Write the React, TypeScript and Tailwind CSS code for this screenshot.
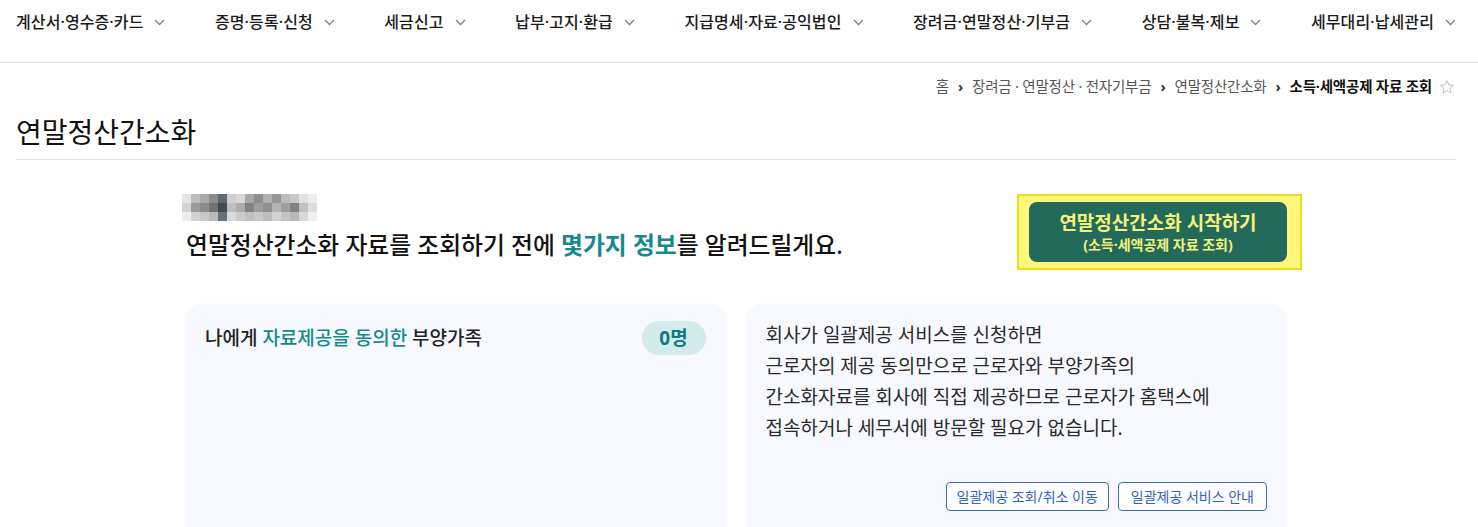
import React from "react";

const FONT = { fontFamily: '"Noto Sans", "Noto Sans CJK KR", sans-serif' };

const navItems = [
  "계산서·영수증·카드",
  "증명·등록·신청",
  "세금신고",
  "납부·고지·환급",
  "지급명세·자료·공익법인",
  "장려금·연말정산·기부금",
  "상담·불복·제보",
  "세무대리·납세관리",
];

function Chevron() {
  return (
    <svg width="11" height="7" viewBox="0 0 11 7" className="ml-[11px] mt-[1px]">
      <polyline points="1,1 5.5,5.5 10,1" fill="none" stroke="#808080" strokeWidth="1.3" />
    </svg>
  );
}

function Star() {
  return (
    <svg width="16" height="16" viewBox="0 0 24 24" className="ml-[7px]">
      <polygon
        points="12,2.5 14.9,8.9 21.8,9.6 16.6,14.2 18.1,21 12,17.5 5.9,21 7.4,14.2 2.2,9.6 9.1,8.9"
        fill="none"
        stroke="#b5b5b5"
        strokeWidth="1.3"
        strokeLinejoin="round"
      />
    </svg>
  );
}

const blur = [
  ["#e4e4e4", "#bdbdbd", "#a9a9a9", "#8c8c8c", "#5f6870", "#cfcfcf", "#d8d8d8", "#a8a8a8", "#8d8d8d", "#b0b0b0", "#969696", "#bcbcbc", "#c8c8c8", "#e0e0e0", "#ececec"],
  ["#d4d4d4", "#9a9a9a", "#8c8c8c", "#727272", "#3f4b57", "#bdbdbd", "#acacac", "#838383", "#9e9e9e", "#8f8f8f", "#b5b5b5", "#9e9e9e", "#828282", "#c0c0c0", "#dddddd"],
  ["#ededed", "#d2d2d2", "#c9c9c9", "#bababa", "#66717b", "#dadada", "#cbcbcb", "#c0c0c0", "#c8c8c8", "#bebebe", "#d4d4d4", "#c4c4c4", "#b8b8b8", "#d8d8d8", "#f0f0f0"],
];

function BlurName() {
  return (
    <div className="flex flex-col w-[136px] h-[27px] overflow-hidden">
      {blur.map((row, i) => (
        <div key={i} className="flex h-[9px]">
          {row.map((c, j) => (
            <div key={j} className="h-[9px] w-[9px] shrink-0" style={{ backgroundColor: c }} />
          ))}
        </div>
      ))}
    </div>
  );
}

export default function App() {
  return (
    <div className="w-[1478px] h-[527px] overflow-hidden bg-white text-[#222]" style={FONT}>
      {/* Top nav */}
      <div className="h-[63px] border-b border-[#e3e3e3] flex justify-between items-start pt-[10px] pl-[16px] pr-[22px]">
        {navItems.map((t) => (
          <div key={t} className="flex items-center h-[24px]">
            <span className="text-[16px] font-medium tracking-[0.1px] text-[#1a1a1a] leading-[24px]">{t}</span>
            <Chevron />
          </div>
        ))}
      </div>

      <div className="pl-[16px] pr-[22px]">
        {/* Breadcrumb */}
        <div className="flex justify-end items-center h-[48px] pr-[1px] text-[14.5px] text-[#555] tracking-[-0.2px]">
          <span>홈</span>
          <span className="mx-[9px] font-bold text-[#333]">›</span>
          <span>장려금 · 연말정산 · 전자기부금</span>
          <span className="mx-[9px] font-bold text-[#333]">›</span>
          <span>연말정산간소화</span>
          <span className="mx-[9px] font-bold text-[#333]">›</span>
          <span className="font-bold text-[#111]">소득·세액공제 자료 조회</span>
          <Star />
        </div>

        {/* Title */}
        <div className="h-[49px] border-b border-[#e3e3e3] flex items-start">
          <h1 className="text-[28px] leading-[42px] text-[#111] font-normal">연말정산간소화</h1>
        </div>

        {/* Content */}
        <div className="w-[1100px] mx-auto">
          <div className="flex justify-between items-start pt-[34px]">
            <div className="flex flex-col">
              <div className="ml-[-4px]">
                <BlurName />
              </div>
              <p className="mt-[7px] text-[23.8px] leading-[34px] font-medium text-[#111]">
                연말정산간소화 자료를 조회하기 전에 <span className="text-[#148a8e] font-bold">몇가지 정보</span>를 알려드릴게요.
              </p>
            </div>
            <div className="mr-[-16px] bg-[#fff67a] border-2 border-[#ecdf16] pl-[10px] pr-[13px] py-[6px]">
              <button className="w-[258px] h-[60px] rounded-[8px] bg-[#236a5b] flex flex-col items-center justify-center text-[#f4f27a]">
                <span className="text-[19px] font-bold leading-[25px]">연말정산간소화 시작하기</span>
                <span className="text-[14px] font-bold leading-[18px]">(소득·세액공제 자료 조회)</span>
              </button>
            </div>
          </div>

          {/* Cards */}
          <div className="grid grid-cols-2 gap-[21px] mt-[34px]">
            <div className="h-[240px] rounded-[16px] bg-[#f7f9fe] shadow-[0_0_3px_rgba(0,0,0,0.04)] pl-[19px] pr-[20px] pt-[17px]">
              <div className="flex justify-between items-center">
                <span className="text-[19px] font-medium text-[#222]">
                  나에게 <span className="text-[#148a8e]">자료제공을 동의한</span> 부양가족
                </span>
                <span className="h-[34px] w-[64px] rounded-full bg-[#d4ebeb] flex items-center justify-center text-[19px] font-bold text-[#137a85]">
                  0명
                </span>
              </div>
            </div>
            <div className="h-[240px] rounded-[16px] bg-[#f7f9fe] shadow-[0_0_3px_rgba(0,0,0,0.04)] pl-[19px] pr-[19px] pt-[16px] flex flex-col">
              <div className="text-[19px] leading-[31px] text-[#2a2a2a]">
                <p>회사가 일괄제공 서비스를 신청하면</p>
                <p>근로자의 제공 동의만으로 근로자와 부양가족의</p>
                <p>간소화자료를 회사에 직접 제공하므로 근로자가 홈택스에</p>
                <p>접속하거나 세무서에 방문할 필요가 없습니다.</p>
              </div>
              <div className="flex justify-end gap-[9px] mt-[38px]">
                <button className="h-[29px] px-[10px] rounded-[4px] border border-[#3a6cce] text-[#2f63c6] text-[14px] bg-white">
                  일괄제공 조회/취소 이동
                </button>
                <button className="h-[29px] px-[12px] rounded-[4px] border border-[#3a6cce] text-[#2f63c6] text-[14px] bg-white">
                  일괄제공 서비스 안내
                </button>
              </div>
            </div>
          </div>
        </div>
      </div>
    </div>
  );
}
